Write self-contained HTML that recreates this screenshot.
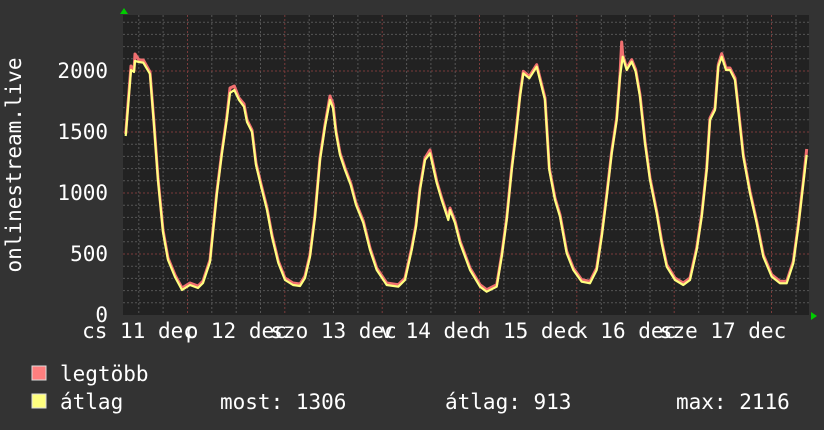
<!DOCTYPE html>
<html><head><meta charset="utf-8"><style>
html,body{margin:0;padding:0;background:#333;}
svg{display:block}
text{font-family:"DejaVu Sans Mono","Liberation Mono",monospace;font-size:21px;fill:#fff}
</style></head><body>
<svg width="824" height="430" viewBox="0 0 824 430" xmlns="http://www.w3.org/2000/svg">
<rect width="824" height="430" fill="#333"/>
<rect x="123" y="15" width="686" height="300" fill="#222"/>
<g stroke="#555" stroke-width="1" stroke-dasharray="2,2">
<path d="M123 302.8H809M123 290.6H809M123 278.4H809M123 266.2H809M123 241.8H809M123 229.6H809M123 217.4H809M123 205.2H809M123 180.8H809M123 168.6H809M123 156.4H809M123 144.2H809M123 119.8H809M123 107.6H809M123 95.4H809M123 83.2H809M123 58.8H809M123 46.6H809M123 34.4H809M123 22.2H809"/>
<path d="M138.8 15V315M163.1 15V315M211.8 15V315M236.2 15V315M260.5 15V315M309.2 15V315M333.5 15V315M357.9 15V315M406.6 15V315M430.9 15V315M455.2 15V315M503.9 15V315M528.3 15V315M552.6 15V315M601.3 15V315M625.6 15V315M650 15V315M698.7 15V315M723 15V315M747.3 15V315M796 15V315"/>
</g>
<g stroke="#7a3b3b" stroke-width="1" stroke-dasharray="2,2">
<path d="M123 254H809M123 193H809M123 132H809M123 71H809"/>
<path d="M187.5 15V315M284.8 15V315M382.2 15V315M479.5 15V315M576.8 15V315M674.2 15V315M771.5 15V315"/>
</g>
<polyline fill="none" stroke="#f07070" stroke-width="3" stroke-linejoin="round" points="125.7,134 128,104 131,66 134,70 135,54 139,60 143.3,60 150,72 154,123 158,178 163,230 168,258 175,275 182,288 190,283 198,286 203,281 210,260 216.7,193 221.7,153 226.7,118 230,88 234.3,86 239,98 244,104 247,120 252,130 256,163 261,184 267,208 272,235 278.3,261 285,278 293,283 300,284 305,276 310,254.7 315,214.7 320,158 325,124.7 330,96 333,104 336,131 340,153 345,168 350.7,183 356,203 363.3,221 370,248 376.7,268 386.7,283 398.3,284.7 405,278 411.7,248 416,224.7 420,188 425,158 430,150 436.7,181 441.7,198 448.3,218 450,208 455,221 460,241 470,268 480,284.7 486.7,289.7 496.7,284.7 501.7,254.7 506.7,218 511.7,168 515.7,134.7 520,94.7 523.3,71.3 529.3,76.3 536.7,64.7 540,78 545,98 549.3,168 555,198 560,214.7 566.7,251.3 573.3,268 581.7,279.7 590,281.3 596.7,268 601.7,234.7 606.7,194.7 611.7,151.3 616.7,118 620,74.7 621.7,42 622.7,54.7 626.7,68 631.7,59.7 635.7,69.7 640,94.7 645,141.3 650,178 656.7,211.3 661.7,241.3 666.7,264.7 675,278 683.3,283 690,278 696.7,248 701.7,214.7 706.7,168 710,118 715,108 718.3,64.7 721.7,53.7 726,68 730,68 735,78 738.3,108 743.3,154.7 750,191.3 756.7,221.3 763.3,254.7 771.7,274.7 780,281.3 786.7,281.3 793.3,261.3 798.3,224.7 803.3,181.3 806.7,149"/>
<polyline fill="none" stroke="#ffff80" stroke-width="2.2" stroke-linejoin="round" points="125.7,136 128,107 131,70 134,72 135,61 139,62 143.3,62.7 150,74 154,125 158,180 163,232 168,260 175,277 182,290 190,285 198,288 203,283 210,262 216.7,195 221.7,155 226.7,120 230,93 234.3,90 239,100 244,106.7 247,122 252,132 256,165 261,186 267,210 272,237 278.3,263 285,280 293,285 300,286 305,278 310,256.7 315,216.7 320,160 325,126.7 330,100 333,108 336,133 340,155 345,170 350.7,185 356,205 363.3,223 370,250 376.7,270 386.7,285 398.3,286.7 405,280 411.7,250 416,226.7 420,190 425,160 430,153.3 436.7,183 441.7,200 448.3,220 450,210 455,223 460,243 470,270 480,286.7 486.7,291.7 496.7,286.7 501.7,256.7 506.7,220 511.7,170 515.7,136.7 520,96.7 523.3,73.3 529.3,78.3 536.7,66.7 540,80 545,100 549.3,170 555,200 560,216.7 566.7,253.3 573.3,270 581.7,281.7 590,283.3 596.7,270 601.7,236.7 606.7,196.7 611.7,153.3 616.7,120 620,76.7 622.7,56.7 626.7,70 631.7,61.7 635.7,71.7 640,96.7 645,143.3 650,180 656.7,213.3 661.7,243.3 666.7,266.7 675,280 683.3,285 690,280 696.7,250 701.7,216.7 706.7,170 710,120 715,110 718.3,66.7 721.7,56.7 726,70 730,70 735,80 738.3,110 743.3,156.7 750,193.3 756.7,223.3 763.3,256.7 771.7,276.7 780,283.3 786.7,283.3 793.3,263.3 798.3,226.7 803.3,183.3 806.7,155"/>
<path d="M120 14L124 8L128 14Z" fill="#0c0"/>
<path d="M811 312L817 316L811 320Z" fill="#0c0"/>
<g text-anchor="end" dominant-baseline="central">
<text x="108" y="315">0</text>
<text x="108" y="254">500</text>
<text x="108" y="193">1000</text>
<text x="108" y="132">1500</text>
<text x="108" y="71">2000</text>
</g>
<g text-anchor="middle" dominant-baseline="central">
<text x="139" y="331">cs 11 dec</text>
<text x="236.2" y="331">p 12 dec</text>
<text x="333.5" y="331">szo 13 dec</text>
<text x="430.9" y="331">v 14 dec</text>
<text x="528.3" y="331">h 15 dec</text>
<text x="625.6" y="331">k 16 dec</text>
<text x="723" y="331">sze 17 dec</text>
</g>
<text transform="translate(21,165) rotate(-90)" text-anchor="middle">onlinestream.live</text>
<rect x="32" y="366" width="14" height="14" fill="#ff7f7f" stroke="#ddd" stroke-width="1"/>
<rect x="32" y="394" width="14" height="14" fill="#ffff7f" stroke="#ddd" stroke-width="1"/>
<g dominant-baseline="central">
<text x="60" y="374">legtöbb</text>
<text x="60" y="402">átlag</text>
<text x="220" y="402">most: 1306</text>
<text x="445" y="402">átlag: 913</text>
<text x="676" y="402">max: 2116</text>
</g>
</svg>
</body></html>
